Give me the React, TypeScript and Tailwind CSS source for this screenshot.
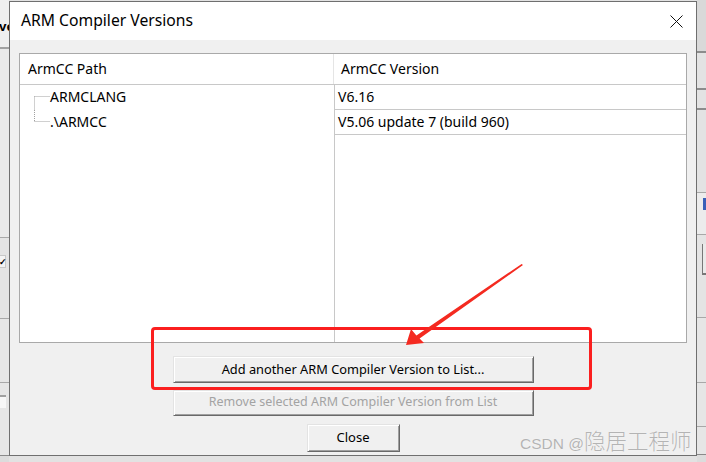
const btn =
  "flex items-center justify-center bg-[#f0f0f0] border border-t-[#e3e3e3] border-l-[#e3e3e3] border-b-[#696969] border-r-[#696969] shadow-[inset_1px_1px_0_#ffffff,inset_-1px_-1px_0_#a0a0a0] leading-none pb-[1px]";

function Connector({ first }: { first: boolean }) {
  return (
    <svg width="16" height="25" className="shrink-0">
      <line x1="0.5" y1="11.5" x2="16" y2="11.5" stroke="#a0a0a0" strokeDasharray="1 1" />
      {first ? (
        <line x1="0.5" y1="11.5" x2="0.5" y2="25" stroke="#a0a0a0" strokeDasharray="1 1" />
      ) : (
        <line x1="0.5" y1="0" x2="0.5" y2="11.5" stroke="#a0a0a0" strokeDasharray="1 1" />
      )}
    </svg>
  );
}

export default function App() {
  return (
    <div className="relative w-[706px] h-[462px] overflow-hidden bg-[#e2e2e2] flex items-start font-['Noto_Sans',sans-serif] text-black">
      {/* left background strip */}
      <div className="w-[9px] h-[462px] flex flex-col bg-[#e6e6e6] overflow-hidden">
        <div className="h-[47px] bg-[#efefef] pt-[20px] text-[13px] font-bold leading-none whitespace-nowrap">
          <span className="ml-[-1px]">ve</span>
        </div>
        <div className="h-[190px] border-t-2 border-[#a2a2a2] bg-[#e9e9e9]" />
        <div className="h-[81px] border-t border-[#a8a8a8] bg-[#e4e4e4] pt-[17px]">
          <div className="w-[6px] h-[13px] bg-[#f4f4f4] border border-l-0 border-[#c8c8c8] flex items-center justify-center text-[9px] font-bold leading-none">✓</div>
        </div>
        <div className="h-[64px] border-t border-[#a8a8a8] bg-[#e6e6e6]" />
        <div className="h-[73px] border-t border-[#a8a8a8] bg-[#e6e6e6] pt-[12px]">
          <div className="w-[6px] h-[13px] bg-[#f7f7f7] border-t-2 border-[#a0a0a0]" />
        </div>
        <div className="flex-1 border-t border-[#8a8a8a] bg-[#dcdcdc]" />
      </div>

      {/* dialog */}
      <div className="mt-[1px] w-[688px] h-[455px] shrink-0 border border-[#6f6f6f] bg-[#f0f0f0] flex flex-col">
        <div className="h-[38px] bg-white flex items-center justify-between pl-[11px] pr-[13px]">
          <span className="text-[15.7px] leading-none">ARM Compiler Versions</span>
          <svg width="13" height="13" viewBox="0 0 13 13">
            <path d="M0.5 0.5 L12.5 12.5 M12.5 0.5 L0.5 12.5" stroke="#111" strokeWidth="1" fill="none" />
          </svg>
        </div>
        <div className="flex-1 flex flex-col items-center pt-[13px] px-[9px]">
          <div className="w-full h-[290px] border border-[#a9a9a9] bg-white flex flex-col text-[14px]">
            <div className="h-[31px] flex border-b border-[#c8c8c8] shrink-0">
              <div className="w-[314px] border-r border-[#e5e5e5] pl-[8px] pb-[2px] flex items-center">ArmCC Path</div>
              <div className="flex-1 pl-[7px] pb-[2px] flex items-center">ArmCC Version</div>
            </div>
            <div className="flex-1 flex">
              <div className="w-[315px] border-r border-[#c8c8c8] pl-[14px] flex flex-col">
                <div className="h-[25px] flex items-center">
                  <Connector first />
                  <span className="pb-[2px]">ARMCLANG</span>
                </div>
                <div className="h-[25px] flex items-center">
                  <Connector first={false} />
                  <span className="pb-[2px]">.\ARMCC</span>
                </div>
              </div>
              <div className="flex-1 flex flex-col">
                <div className="h-[25px] border-b border-[#c8c8c8] pl-[3px] pb-[1px] flex items-center">V6.16</div>
                <div className="h-[25px] border-b border-[#c8c8c8] pl-[3px] pb-[1px] flex items-center">V5.06 update 7 (build 960)</div>
              </div>
            </div>
          </div>
          <button className={`${btn} w-[361px] h-[27px] mt-[13px] text-[12.8px]`}>Add another ARM Compiler Version to List...</button>
          <button className={`${btn} w-[361px] h-[26px] mt-[7px] text-[12.5px] text-[#a3a3a3]`}>Remove selected ARM Compiler Version from List</button>
          <button className={`${btn} w-[93px] h-[28px] mt-[8px] text-[13px]`}>Close</button>
        </div>
      </div>

      {/* right background strip */}
      <div className="w-[9px] h-[462px] flex flex-col bg-[#dedede] overflow-hidden">
        <div className="h-[51px] bg-[#d9d9d9]" />
        <div className="h-[37px] border-t-2 border-[#8c8c8c] bg-[#e3e3e3]" />
        <div className="h-[20px] border-t-2 border-[#8c8c8c] bg-[#e3e3e3]" />
        <div className="h-[84px] border-t-2 border-[#8c8c8c] bg-[#e3e3e3]" />
        <div className="h-[42px] border-t border-[#a8a8a8] bg-[#ececec] flex justify-end pt-[5px]">
          <div className="w-[3px] h-[12px] bg-[#3a5fb8]" />
        </div>
        <div className="h-[83px] border-t border-[#a8a8a8] bg-[#e4e4e4] pt-[9px] flex justify-end">
          <div className="w-[4px] h-[31px] border-l border-b-2 border-[#777] bg-[#eaeaea]" />
        </div>
        <div className="h-[65px] border-t border-[#a8a8a8] bg-[#e6e6e6]" />
        <div className="h-[44px] border-t border-[#a8a8a8] bg-[#e6e6e6]" />
        <div className="h-[28px] border-t border-[#a8a8a8] bg-[#e6e6e6]" />
        <div className="flex-1 border-t border-[#8a8a8a] bg-[#dcdcdc]" />
      </div>

      {/* annotation overlays */}
      <div className="absolute left-[151px] top-[327px] w-[441px] h-[63px] border-[3px] border-[#fb1f1f] rounded-[4px] pointer-events-none" />
      <svg className="absolute left-0 top-0 pointer-events-none" width="706" height="462">
        <polygon
          points="406,345 424,343 419.6,338.6 523,265 521.6,264 416.4,335.4 411,329"
          fill="#f42a20"
        />
      </svg>
      <div className="absolute left-[520px] top-[429px] text-[#b4b4b4] leading-none whitespace-nowrap [text-shadow:0_0_1px_#fff] font-['Liberation_Sans','Noto_Sans_CJK_SC',sans-serif]">
        <span className="text-[15.5px]">CSDN @</span>
        <span className="text-[21.5px] font-['Noto_Sans_CJK_SC',sans-serif] font-light">隐居工程师</span>
      </div>
    </div>
  );
}
